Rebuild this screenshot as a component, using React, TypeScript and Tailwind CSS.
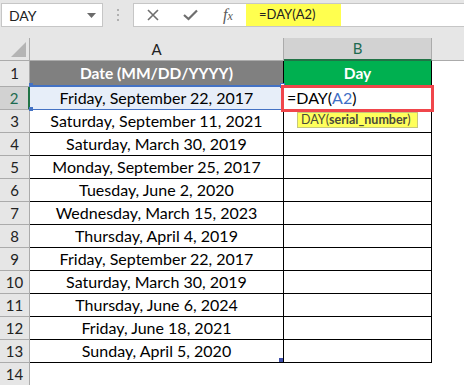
import React from 'react';

const dates: string[] = [
  "Friday, September 22, 2017",
  "Saturday, September 11, 2021",
  "Saturday, March 30, 2019",
  "Monday, September 25, 2017",
  "Tuesday, June 2, 2020",
  "Wednesday, March 15, 2023",
  "Thursday, April 4, 2019",
  "Friday, September 22, 2017",
  "Saturday, March 30, 2019",
  "Thursday, June 6, 2024",
  "Friday, June 18, 2021",
  "Sunday, April 5, 2020",
];

export default function App() {
  return (
    <div className="relative w-[464px] h-[385px] overflow-hidden bg-white font-['Lato',sans-serif] text-black">
      {/* Formula bar */}
      <div className="h-[38px] bg-[#e6e6e6] flex items-start pt-[3px]">
        <div className="ml-[1px] w-[102px] h-[24px] bg-white border border-[#c6c6c6] flex items-center justify-between pl-[7px] pr-[6px]">
          <span className="text-[14px] text-[#222]">DAY</span>
          <svg width="9" height="5" viewBox="0 0 9 5">
            <path d="M0 0 L9 0 L4.5 5 Z" fill="#6b6b6b" />
          </svg>
        </div>
        <div className="w-[30px] h-[24px] flex flex-col items-center justify-center gap-[3px]">
          <span className="w-[2px] h-[2px] bg-[#b0b0b0]" />
          <span className="w-[2px] h-[2px] bg-[#b0b0b0]" />
          <span className="w-[2px] h-[2px] bg-[#b0b0b0]" />
        </div>
        <div className="flex-1 h-[24px] bg-white border border-r-0 border-[#c6c6c6] flex items-stretch">
          <div className="w-[112px] flex items-center">
            <svg className="ml-[13px]" width="12" height="12" viewBox="0 0 12 12">
              <path d="M1 1 L11 11 M11 1 L1 11" stroke="#6e6e6e" strokeWidth="1.6" />
            </svg>
            <svg className="ml-[24px]" width="15" height="12" viewBox="0 0 15 12">
              <path d="M1 6 L5.5 10 L14 1.5" stroke="#6e6e6e" strokeWidth="2.2" fill="none" />
            </svg>
            <span className="ml-[25px] font-['Liberation_Serif',serif] italic text-[16px] text-[#5a5a5a] leading-none">
              f<span className="text-[12px]">x</span>
            </span>
          </div>
          <div className="w-[95px] bg-[#ffff4f] flex items-center pl-[13px] text-[13px] text-[#222]">
            =DAY(A2)
          </div>
        </div>
      </div>

      {/* Sheet */}
      <div className="grid grid-cols-[30px_254px_148px_1fr]">
        {/* Column headers */}
        <div className="h-[23px] bg-[#e6e6e6] border-r border-b border-[#ababab] relative">
          <svg className="absolute left-[11px] top-[4px]" width="15" height="15" viewBox="0 0 15 15">
            <path d="M15 0 L15 15 L0 15 Z" fill="#b4b4b4" />
          </svg>
        </div>
        <div className="h-[23px] bg-[#e6e6e6] border-r border-b border-[#ababab] flex items-center justify-center text-[15px] text-[#222]">
          A
        </div>
        <div className="h-[23px] bg-[#d2d2d2] border-r border-[#ababab] border-b-2 border-b-[#217346] flex items-center justify-center text-[15px] text-[#1e6b50]">
          B
        </div>
        <div className="h-[23px] bg-[#e6e6e6] border-b border-[#ababab]" />

        {/* Row 1 */}
        <div className="h-[26px] bg-[#e6e6e6] border-r border-b border-[#ababab] flex items-center justify-center text-[15px] text-[#222]">
          1
        </div>
        <div className="h-[26px] bg-[#808080] border-r border-b border-black flex items-center justify-center text-[15.5px] font-bold text-white">
          Date (MM/DD/YYYY)
        </div>
        <div className="h-[26px] bg-[#00b050] border-r border-b border-black flex items-center justify-center text-[15.5px] font-bold text-white">
          Day
        </div>
        <div className="h-[26px]" />

        {/* Rows 2-13 */}
        {dates.map((d, i) => {
          const selected = i === 0;
          return (
            <React.Fragment key={i}>
              <div
                className={
                  selected
                    ? "h-[23px] bg-[#d2d2d2] border-r-2 border-r-[#217346] border-b border-b-[#ababab] flex items-center justify-center text-[15px] text-[#1e6b50]"
                    : "h-[23px] bg-[#e6e6e6] border-r border-b border-[#ababab] flex items-center justify-center text-[15px] text-[#222]"
                }
              >
                {i + 2}
              </div>
              <div
                className={
                  selected
                    ? "h-[23px] bg-[#e7eef9] border-r border-black border-b border-b-[#4472c4] flex items-center justify-center text-[16px]"
                    : "h-[23px] border-r border-b border-black flex items-center justify-center text-[16px]"
                }
              >
                {d}
              </div>
              <div className="h-[23px] border-r border-b border-black flex items-center text-[16px]">
                {selected && (
                  <span className="ml-[3px]">
                    =DAY(<span className="text-[#3f6fc6]">A2</span>)
                  </span>
                )}
              </div>
              <div className="h-[23px]" />
            </React.Fragment>
          );
        })}

        {/* Row 14 */}
        <div className="h-[23px] bg-[#e6e6e6] border-r border-b border-[#ababab] flex items-center justify-center text-[15px] text-[#222]">
          14
        </div>
        <div className="h-[23px]" />
        <div className="h-[23px]" />
        <div className="h-[23px]" />
      </div>

      {/* A2 reference box */}
      <div className="absolute left-[30px] top-[85px] w-[253px] h-[2px] bg-[#4472c4]" />
      <div className="absolute left-[29px] top-[83px] w-[4px] h-[4px] bg-[#4472c4]" />
      <div className="absolute left-[29px] top-[107px] w-[4px] h-[4px] bg-[#4472c4]" />
      <div className="absolute left-[280px] top-[83px] w-[5px] h-[5px] bg-white border border-[#4472c4]" />
      <div className="absolute left-[279px] top-[358px] w-[4px] h-[4px] bg-[#3f4fa8]" />

      {/* Red annotation box */}
      <div className="absolute left-[281px] top-[85px] w-[153px] h-[27px] border-[3px] border-[#f0464b]" />

      {/* Function tooltip */}
      <div className="absolute left-[297px] top-[112px] w-[121px] h-[16px] bg-[#ffff5c] border border-[#c8c87a] flex items-center pl-[3px] text-[12.5px] text-[#4a4a3a] leading-none">
        DAY(<span className="font-bold">serial_number</span>)
      </div>
    </div>
  );
}
